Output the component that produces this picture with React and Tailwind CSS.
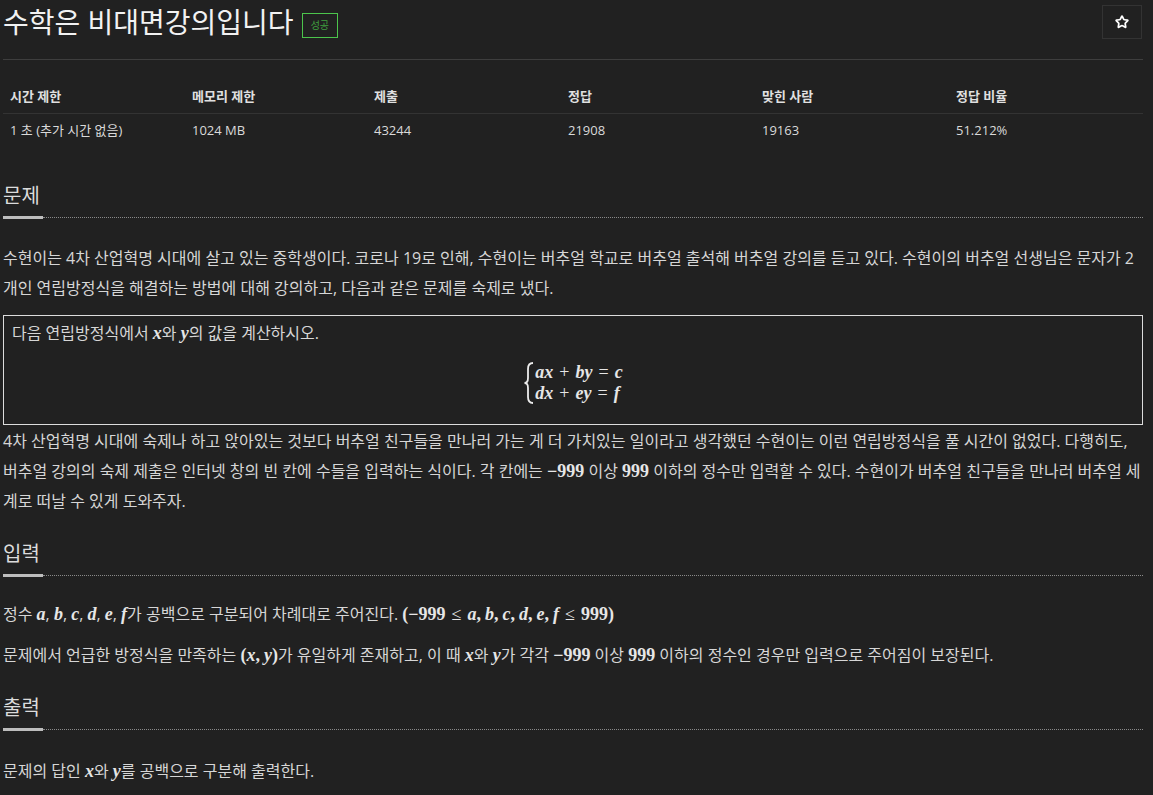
import React from 'react';
import { Star } from 'lucide-react';

const stats = [
  { label: '시간 제한', value: '1 초 (추가 시간 없음)' },
  { label: '메모리 제한', value: '1024 MB' },
  { label: '제출', value: '43244' },
  { label: '정답', value: '21908' },
  { label: '맞힌 사람', value: '19163' },
  { label: '정답 비율', value: '51.212%' },
];

// italic math variable / expression
const M = ({ children }) => (
  <span className="font-['Liberation_Serif',serif] italic font-bold text-[18px] leading-none text-[#e6e6e6]">{children}</span>
);

// upright math (numbers, operators)
const N = ({ children }) => (
  <span className="font-['Liberation_Serif',serif] font-bold text-[18px] leading-none text-[#e6e6e6]">{children}</span>
);

// operator with spacing
const Op = ({ children }) => (
  <span className="font-['Liberation_Serif',serif] text-[18px] leading-none text-[#e6e6e6] mx-[6px]">{children}</span>
);

// comma inside a math list
const C = () => (
  <span className="font-['Liberation_Serif',serif] font-bold text-[18px] leading-none text-[#e6e6e6] mr-[4px]">,</span>
);

const Heading = ({ title, className = '' }) => (
  <div className={className}>
    <h2 className="text-[20px] leading-[30px] text-[#dcdcdc]">{title}</h2>
    <div className="flex items-center mt-[5px] h-[3px]">
      <div className="h-[3px] w-[40px] bg-[#bdbdbd]" />
      <div className="flex-1 border-t border-dotted border-[#8a8a8a]" />
    </div>
  </div>
);

const Brace = () => (
  <svg width="11" height="42" viewBox="0 0 11 42" className="mr-[1px]">
    <path
      d="M10 1 C6 1 5 3 5 7 L5 16 C5 19 4 21 1.5 21 C4 21 5 23 5 26 L5 35 C5 39 6 41 10 41"
      fill="none"
      stroke="#ececec"
      strokeWidth="1.8"
    />
  </svg>
);

const App = () => {
  return (
    <div className="min-h-screen bg-[#212121] pl-[3px] pr-[10px] pb-10 font-['Open_Sans','Noto_Sans_CJK_KR',sans-serif] text-[#d6d6d6]">
      {/* Title */}
      <div className="flex items-start justify-between pt-[5px]">
        <div className="flex items-center h-[34px]">
          <h1 className="text-[28px] leading-[34px] text-[#f2f2f2]">수학은 비대면강의입니다</h1>
          <span className="ml-[8px] mt-[6px] border border-[#4cc44c] px-[8px] h-[25px] leading-[23px] text-[10px] text-[#3f9f3f]">
            성공
          </span>
        </div>
        <button className="w-[40px] h-[34px] mr-[1px] flex items-center justify-center border border-[#333333]">
          <Star size={14} strokeWidth={3} color="#ffffff" />
        </button>
      </div>

      <div className="mt-[20px] h-px bg-[#3e3e3e]" />

      {/* Stats table */}
      <div className="mt-[20px] text-[13px]">
        <div className="grid grid-cols-[182px_182px_194px_194px_194px_1fr] h-[34px] items-center border-b border-[#333333] font-bold text-[#e0e0e0]">
          {stats.map((s) => (
            <div key={s.label} className="pl-[7px]">{s.label}</div>
          ))}
        </div>
        <div className="grid grid-cols-[182px_182px_194px_194px_194px_1fr] h-[34px] items-center text-[#dadada]">
          {stats.map((s) => (
            <div key={s.label} className="pl-[7px]">{s.value}</div>
          ))}
        </div>
      </div>

      {/* 문제 */}
      <Heading title="문제" className="mt-[33px]" />
      <div className="mt-[24px] text-[16px] leading-[30px]">
        <p>
          수현이는 4차 산업혁명 시대에 살고 있는 중학생이다. 코로나 19로 인해, 수현이는 버추얼 학교로 버추얼 출석해 버추얼 강의를 듣고 있다. 수현이의 버추얼 선생님은 문자가 2개인 연립방정식을 해결하는 방법에 대해 강의하고, 다음과 같은 문제를 숙제로 냈다.
        </p>
        <div className="mt-[12px] border border-[#dcdcdc] px-[8px] pt-[4px] h-[110px]">
          <p className="leading-[26px]">
            다음 연립방정식에서 <M>x</M>와 <M>y</M>의 값을 계산하시오.
          </p>
          <div className="flex justify-center mt-[16px]">
            <div className="flex items-center">
              <Brace />
              <div className="flex flex-col leading-[21px]">
                <span><M>ax</M><Op>+</Op><M>by</M><Op>=</Op><M>c</M></span>
                <span><M>dx</M><Op>+</Op><M>ey</M><Op>=</Op><M>f</M></span>
              </div>
            </div>
          </div>
        </div>
        <p className="mt-px">
          4차 산업혁명 시대에 숙제나 하고 앉아있는 것보다 버추얼 친구들을 만나러 가는 게 더 가치있는 일이라고 생각했던 수현이는 이런 연립방정식을 풀 시간이 없었다. 다행히도, 버추얼 강의의 숙제 제출은 인터넷 창의 빈 칸에 수들을 입력하는 식이다. 각 칸에는 <N>−999</N> 이상 <N>999</N> 이하의 정수만 입력할 수 있다. 수현이가 버추얼 친구들을 만나러 버추얼 세계로 떠날 수 있게 도와주자.
        </p>
      </div>

      {/* 입력 */}
      <Heading title="입력" className="mt-[23px]" />
      <div className="mt-[22px] text-[16px] leading-[30px]">
        <p>
          정수 <M>a</M>, <M>b</M>, <M>c</M>, <M>d</M>, <M>e</M>, <M>f</M>가 공백으로 구분되어 차례대로 주어진다. <N>(−999</N><Op>≤</Op><M>a</M><C /><M>b</M><C /><M>c</M><C /><M>d</M><C /><M>e</M><C /><M>f</M><Op>≤</Op><N>999)</N>
        </p>
        <p className="mt-[11px]">
          문제에서 언급한 방정식을 만족하는 <N>(</N><M>x</M><C /><M>y</M><N>)</N>가 유일하게 존재하고, 이 때 <M>x</M>와 <M>y</M>가 각각 <N>−999</N> 이상 <N>999</N> 이하의 정수인 경우만 입력으로 주어짐이 보장된다.
        </p>
      </div>

      {/* 출력 */}
      <Heading title="출력" className="mt-[23px]" />
      <div className="mt-[25px] text-[16px] leading-[30px]">
        <p>
          문제의 답인 <M>x</M>와 <M>y</M>를 공백으로 구분해 출력한다.
        </p>
      </div>
    </div>
  );
};

export default App;
